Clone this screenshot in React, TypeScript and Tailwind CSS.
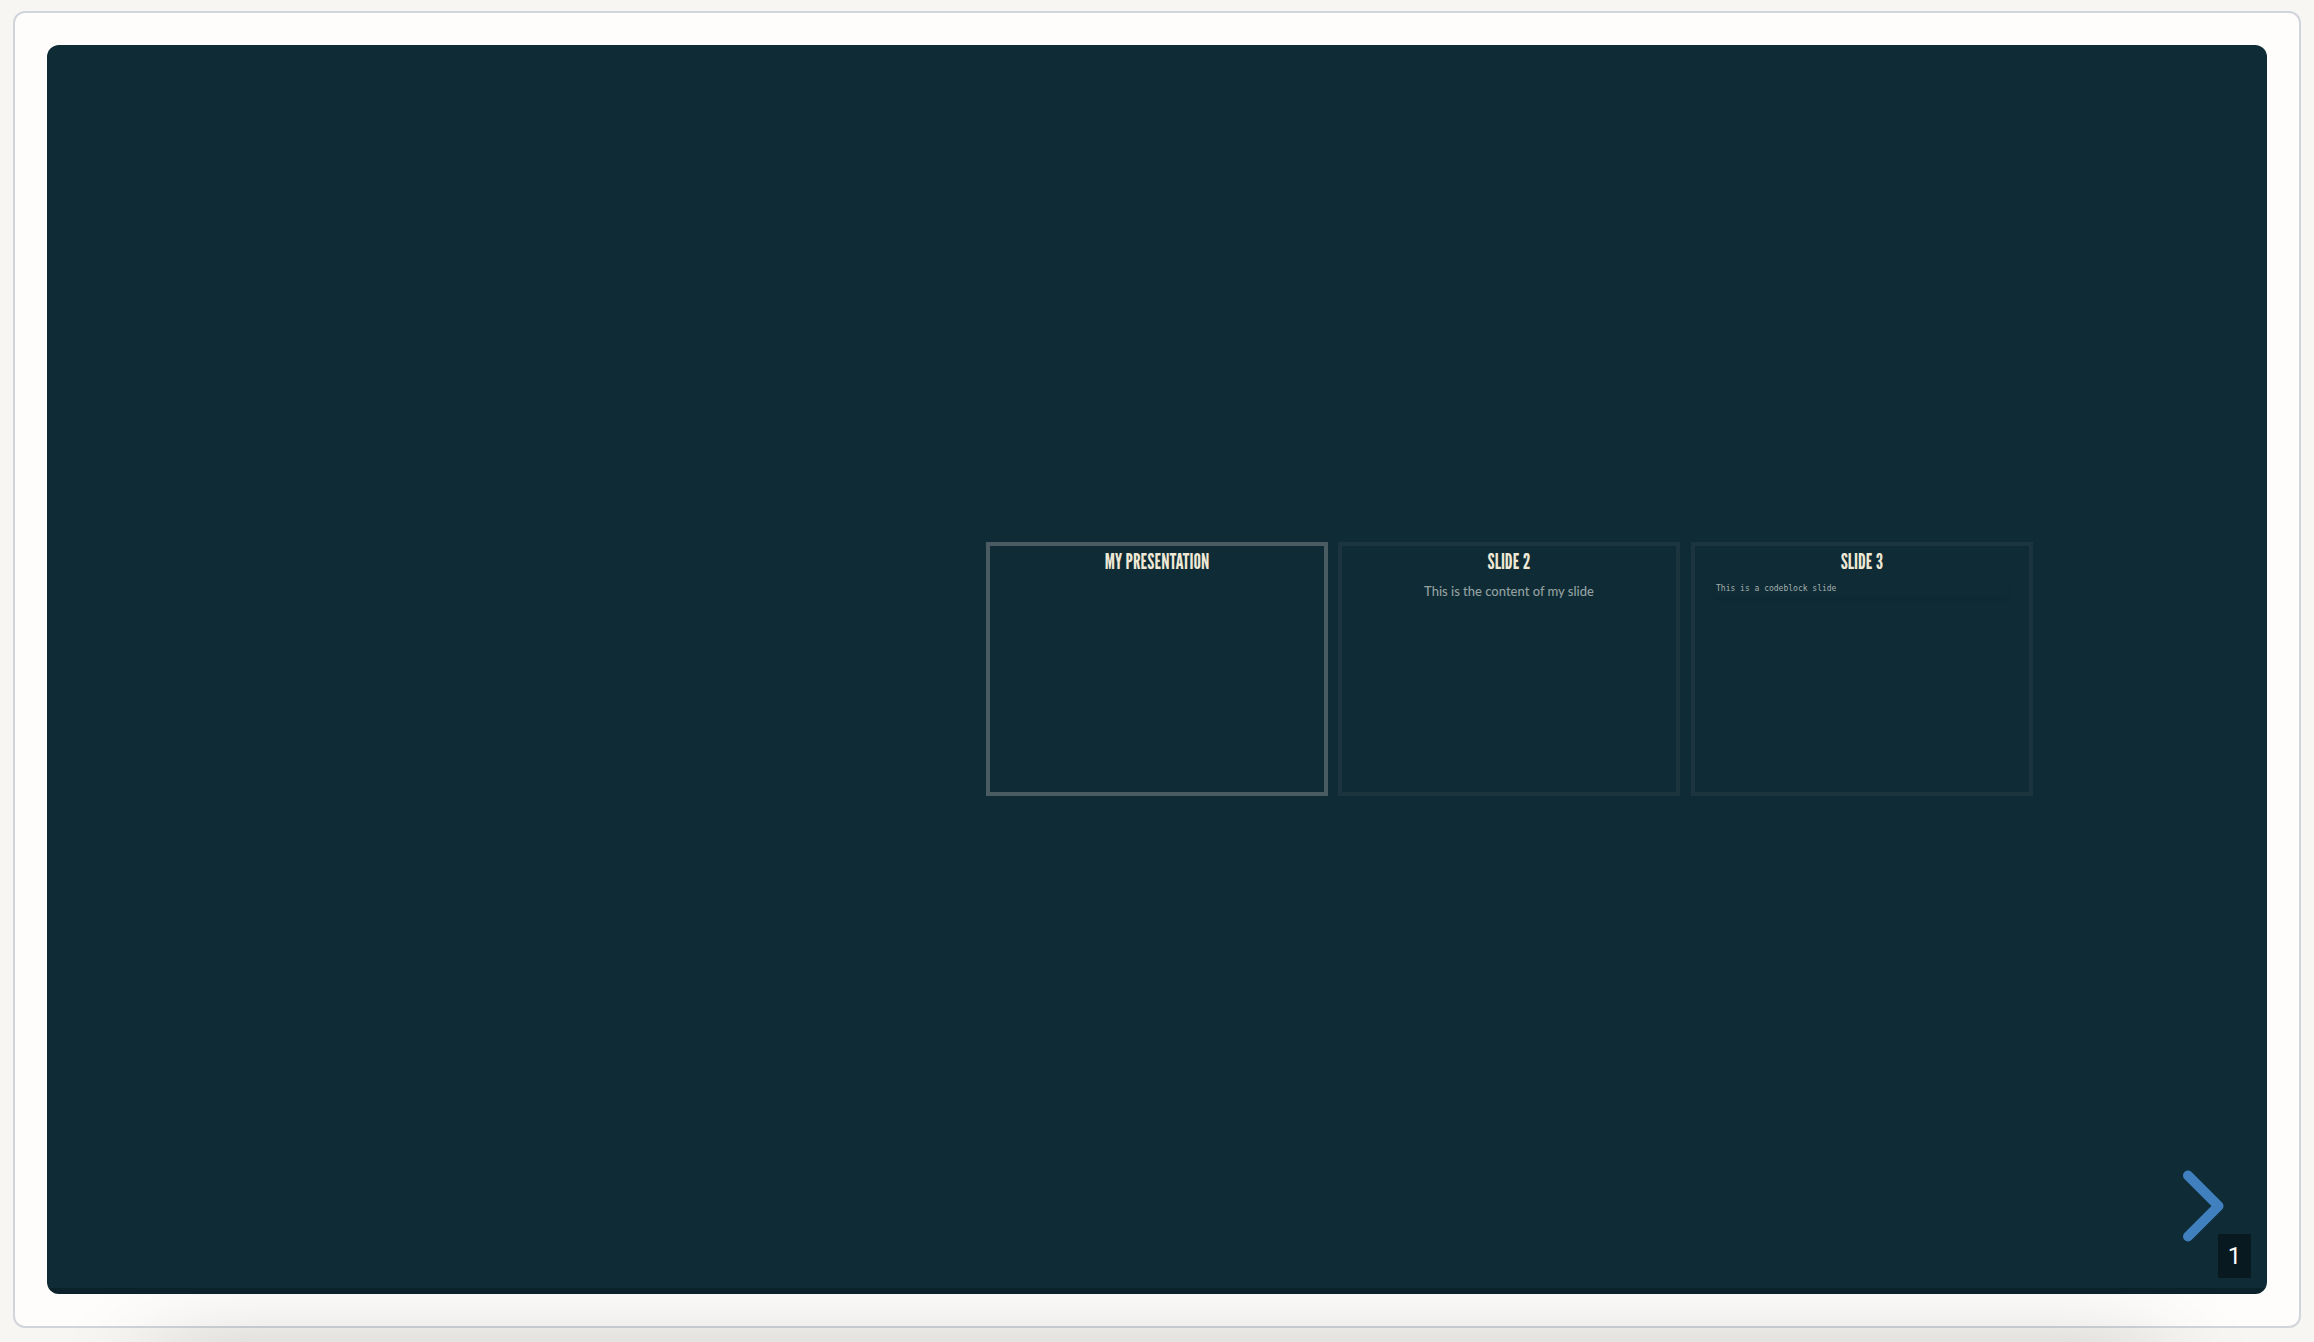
import clsx from 'clsx';

interface Slide {
  title: string;
  text?: string;
  code?: string;
}

const slides: Slide[] = [
  { title: 'My Presentation' },
  { title: 'Slide 2', text: 'This is the content of my slide' },
  { title: 'Slide 3', code: 'This is a codeblock slide' },
];

function SlideCard({ slide, active }: { slide: Slide; active?: boolean }) {
  return (
    <section
      className={clsx(
        'w-[342px] h-[254px] shrink-0 border-4 pt-1 text-center',
        active ? 'border-[#4b5b62]' : 'border-[#1c343d]'
      )}
    >
      <h2 className="font-['League_Gothic','Roboto_Condensed',sans-serif] text-[21px] leading-6 font-normal uppercase text-[#eee8d5]">
        {slide.title}
      </h2>
      {slide.text && (
        <p className="mt-[7px] font-['Lato',sans-serif] text-[13px] leading-5 font-medium text-[#93a1a1]">{slide.text}</p>
      )}
      {slide.code && (
        <pre className="mx-5 mt-2 pt-px pb-0.5 pl-px text-left font-['DejaVu_Sans_Mono',monospace] text-[8px] leading-3 text-[#a5b0b0] shadow-[0_2px_4px_rgba(0,0,0,0.08)]">
          <code className="font-['DejaVu_Sans_Mono',monospace]">{slide.code}</code>
        </pre>
      )}
    </section>
  );
}

export default function App() {
  const [first, ...rest] = slides;

  return (
    <div className="h-screen overflow-hidden bg-[#f7f6f2] px-[13px] pt-[11px]">
      <div className="h-[calc(100vh-25px)] rounded-xl border-2 border-[#d1d5db] bg-[#fefdfb] p-8">
        <main className="relative h-full rounded-xl bg-[#0f2b35]">
          <div className="grid h-full grid-cols-[1fr_342px_1fr] items-center gap-[10px] overflow-hidden rounded-xl pb-0.5">
            <div className="col-start-2">
              <SlideCard slide={first} active />
            </div>
            <div className="flex gap-[11px]">
              {rest.map((slide) => (
                <SlideCard key={slide.title} slide={slide} />
              ))}
            </div>
          </div>

          {/* Navigation */}
          <button aria-label="Next slide" className="absolute right-[43px] bottom-[52px]">
            <svg width="41" height="72" viewBox="0 0 41 72" fill="none" stroke="#4080bf" strokeWidth="10" strokeLinecap="round" strokeLinejoin="round">
              <path d="M5 5.500L35.500 36L5 66.500" />
            </svg>
          </button>
          <div className="absolute right-4 bottom-4 flex h-11 w-[33px] items-center justify-center bg-[#08191f] font-['Roboto','Liberation_Sans',sans-serif] text-2xl text-white">
            1
          </div>

          {/* Progress track */}
          <div className="absolute inset-0 flex items-end overflow-hidden rounded-xl pointer-events-none">
            <div className="h-[6px] w-full bg-black/20" />
          </div>
        </main>
      </div>

      {/* Shadow cast upwards from below the fold */}
      <div className="mx-[144px] mt-9 h-40 shadow-[0_0_100px_rgba(0,0,0,0.25)]" />
    </div>
  );
}
